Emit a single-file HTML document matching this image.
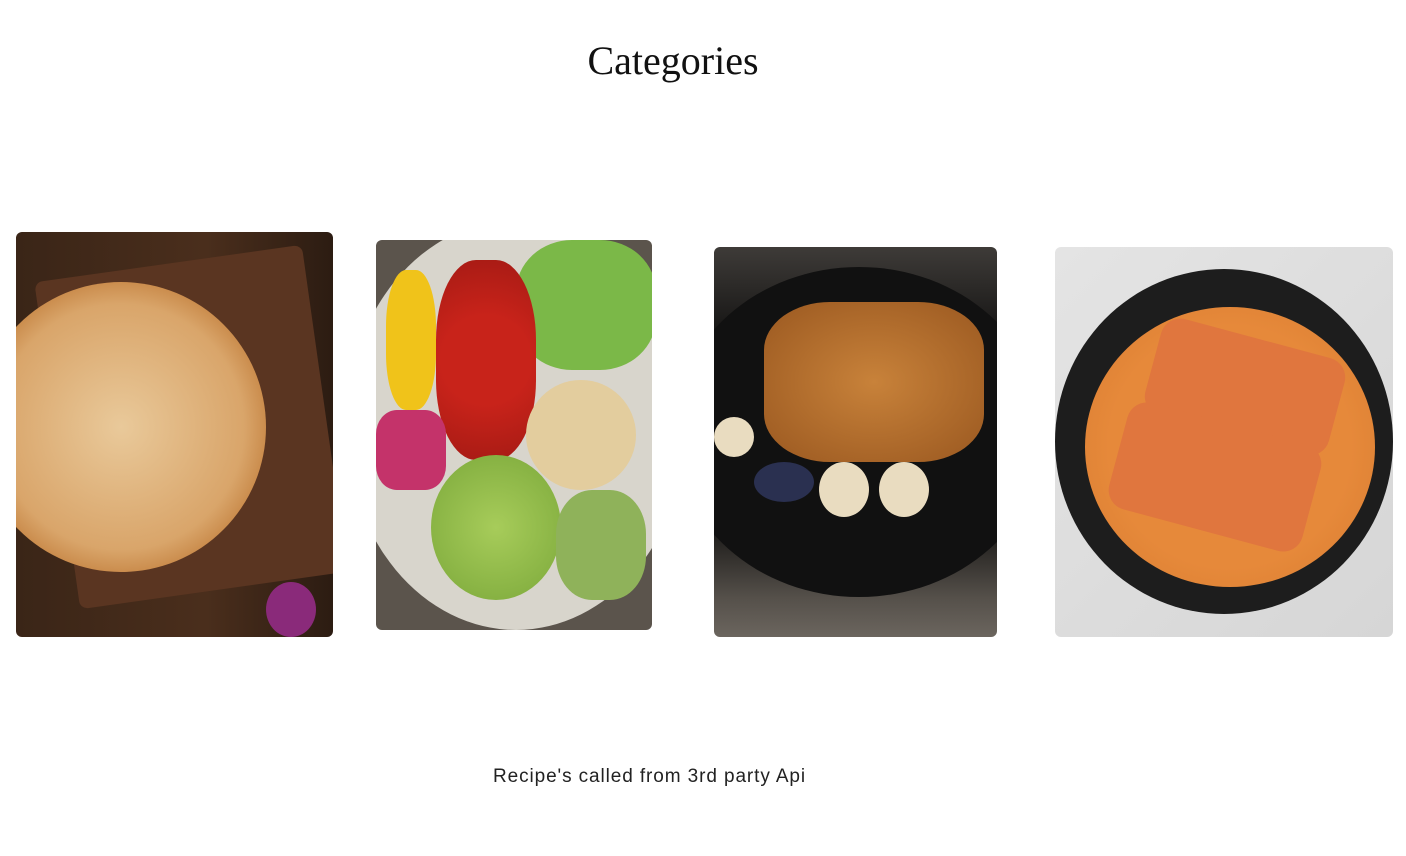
<!DOCTYPE html>
<html><head><meta charset="utf-8"><style>
body{margin:0;width:1406px;height:856px;background:#fff;position:relative;overflow:hidden;font-family:"Liberation Sans",sans-serif}
h1{position:absolute;top:37px;left:0;width:1346px;text-align:center;margin:0;font-family:"Liberation Serif",serif;font-weight:400;font-size:40px;color:#111}
.c{position:absolute;border-radius:6px;overflow:hidden}
p{position:absolute;top:766px;left:493px;margin:0;font-size:19px;letter-spacing:0.9px;color:#222}
</style></head><body>
<h1>Categories</h1>
<div class="c" style="left:16px;top:232px;width:317px;height:405px;background:linear-gradient(90deg,#3a2517,#4a2e1c 60%,#2c1c12)">
 <div style="position:absolute;left:40px;top:30px;width:270px;height:330px;background:#5a3521;border-radius:8px;transform:rotate(-8deg)"></div>
 <div style="position:absolute;left:-40px;top:50px;width:290px;height:290px;border-radius:50%;background:radial-gradient(circle,#e9c99a,#d9a56a 60%,#c98a4a 72%,#e2b680 75%,transparent 76%)"></div>
 <div style="position:absolute;left:250px;top:350px;width:50px;height:55px;border-radius:50%;background:#8a2a7a"></div>
</div>
<div class="c" style="left:376px;top:240px;width:276px;height:390px;background:#5b544c">
 <div style="position:absolute;left:-30px;top:-20px;width:340px;height:410px;border-radius:50%;background:#d8d5cc"></div>
 <div style="position:absolute;left:140px;top:0;width:140px;height:130px;background:#7bb848;border-radius:40%"></div>
 <div style="position:absolute;left:60px;top:20px;width:100px;height:200px;background:radial-gradient(circle,#c8231a 40%,#a41a14);border-radius:40%"></div>
 <div style="position:absolute;left:10px;top:30px;width:50px;height:140px;background:#f0c31a;border-radius:40%"></div>
 <div style="position:absolute;left:0;top:170px;width:70px;height:80px;background:#c4336a;border-radius:30%"></div>
 <div style="position:absolute;left:150px;top:140px;width:110px;height:110px;background:#e3cd9e;border-radius:50%"></div>
 <div style="position:absolute;left:55px;top:215px;width:130px;height:145px;background:radial-gradient(circle,#a7cc5a,#7ba83a);border-radius:50%"></div>
 <div style="position:absolute;left:180px;top:250px;width:90px;height:110px;background:#8fb25a;border-radius:40%"></div>
</div>
<div class="c" style="left:714px;top:247px;width:283px;height:390px;background:linear-gradient(#3e3b38,#1a1918 20%,#141312 70%,#55504a 90%,#6b655e)">
 <div style="position:absolute;left:-40px;top:20px;width:370px;height:330px;border-radius:50%;background:#111"></div>
 <div style="position:absolute;left:50px;top:55px;width:220px;height:160px;background:radial-gradient(ellipse,#c8823a,#9a5820);border-radius:30%"></div>
 <div style="position:absolute;left:0;top:170px;width:40px;height:40px;border-radius:50%;background:#e9dcc0"></div>
 <div style="position:absolute;left:105px;top:215px;width:50px;height:55px;border-radius:50%;background:#e9dcc0"></div>
 <div style="position:absolute;left:165px;top:215px;width:50px;height:55px;border-radius:50%;background:#e9dcc0"></div>
 <div style="position:absolute;left:40px;top:215px;width:60px;height:40px;border-radius:50%;background:#2a3050"></div>
</div>
<div class="c" style="left:1055px;top:247px;width:338px;height:390px;background:linear-gradient(135deg,#e4e4e4,#d6d6d6)">
 <div style="position:absolute;left:0;top:22px;width:338px;height:345px;border-radius:50%;background:#1d1d1d"></div>
 <div style="position:absolute;left:30px;top:60px;width:290px;height:280px;border-radius:50%;background:radial-gradient(circle,#e88a3a,#e6893a 60%,#d67a30)"></div>
 <div style="position:absolute;left:95px;top:90px;width:190px;height:100px;background:#e0763e;border-radius:20px;transform:rotate(15deg)"></div>
 <div style="position:absolute;left:60px;top:175px;width:200px;height:110px;background:#e0763e;border-radius:20px;transform:rotate(15deg)"></div>
</div>
<p>Recipe's called from 3rd party Api</p>
</body></html>
